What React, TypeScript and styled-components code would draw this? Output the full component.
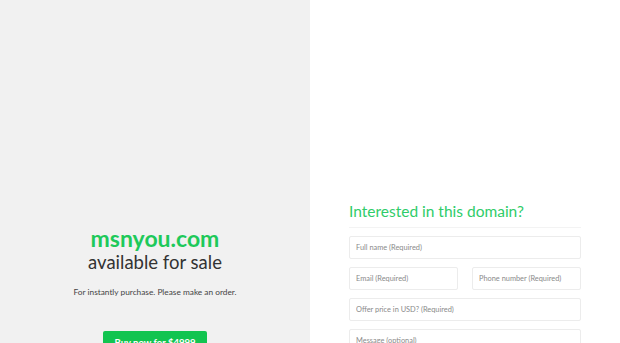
import { createGlobalStyle } from "styled-components";
import styled from "styled-components";

const GlobalStyle = createGlobalStyle`
  html, body {
    margin: 0;
    padding: 0;
    background: #ffffff;
    font-family: "Lato", "Noto Sans", sans-serif;
  }
  * {
    box-sizing: border-box;
  }
`;

const Page = styled.div`
  display: grid;
  grid-template-columns: 310px 310px;
  height: 343px;
  overflow: hidden;
`;

const SalePanel = styled.section`
  background: #f1f1f1;
  display: flex;
  flex-direction: column;
  align-items: center;
  padding-top: 225px;
`;

const DomainName = styled.h1`
  margin: 0;
  font-size: 23px;
  line-height: 26px;
  font-weight: 700;
  color: #1ec95a;
`;

const Tagline = styled.h2`
  margin: 0;
  font-size: 18.5px;
  line-height: 22px;
  font-weight: 400;
  color: #333333;
`;

const Note = styled.p`
  margin: 13px 0 0;
  font-size: 8.3px;
  line-height: 12px;
  color: #444444;
`;

const BuyButton = styled.button`
  margin-top: 33px;
  border: none;
  border-radius: 2px;
  background: #12c450;
  color: #ffffff;
  font-family: inherit;
  font-size: 9.5px;
  font-weight: 700;
  padding: 6px 11px 12px;
  cursor: pointer;
`;

const OfferPanel = styled.section`
  background: #ffffff;
  padding-top: 199px;
  display: flex;
  justify-content: center;
`;

const OfferForm = styled.form`
  width: 232px;
  display: flex;
  flex-direction: column;
  gap: 8px;
`;

const FormTitle = styled.h3`
  margin: 0;
  font-size: 15.5px;
  line-height: 24px;
  font-weight: 400;
  color: #2fcc69;
  padding-bottom: 4px;
  border-bottom: 1px solid #f3f3f3;
`;

const Row = styled.div`
  display: flex;
  gap: 14px;
`;

const Field = styled.input`
  width: 100%;
  min-width: 0;
  height: 23px;
  border: 1px solid #ececec;
  border-radius: 2px;
  padding: 0 6px;
  font-family: inherit;
  font-size: 7.4px;
  color: #555555;
  background: #ffffff;
  outline: none;

  &::placeholder {
    color: #8a8a8a;
  }
`;

export default function App() {
  return (
    <>
      <GlobalStyle />
      <Page>
        <SalePanel>
          <DomainName>msnyou.com</DomainName>
          <Tagline>available for sale</Tagline>
          <Note>For instantly purchase. Please make an order.</Note>
          <BuyButton type="button">Buy now for $4999</BuyButton>
        </SalePanel>
        <OfferPanel>
          <OfferForm onSubmit={(e) => e.preventDefault()}>
            <FormTitle>Interested in this domain?</FormTitle>
            <Field placeholder="Full name (Required)" />
            <Row>
              <Field placeholder="Email (Required)" />
              <Field placeholder="Phone number (Required)" />
            </Row>
            <Field placeholder="Offer price in USD? (Required)" />
            <Field placeholder="Message (optional)" />
          </OfferForm>
        </OfferPanel>
      </Page>
    </>
  );
}
